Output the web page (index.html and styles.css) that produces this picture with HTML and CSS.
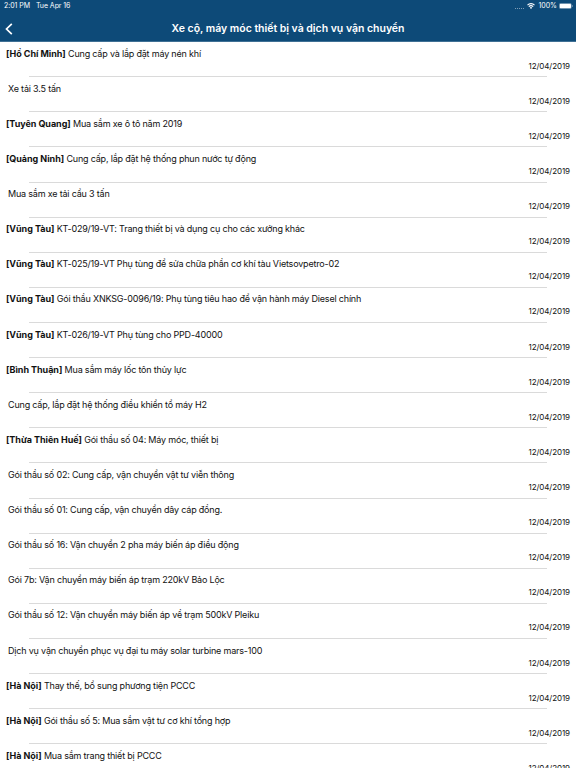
FILE: index.html
```html
<!DOCTYPE html>
<html lang="vi">
<head>
<meta charset="utf-8">
<title>Xe cộ, máy móc thiết bị và dịch vụ vận chuyển</title>
<link rel="stylesheet" href="styles.css">
</head>
<body>
<header class="header">
  <div class="status">
    <span class="clock">2:01 PM</span><span class="day">Tue Apr 16</span>
    <span class="dots"></span>
    <svg class="wifi" viewBox="0 0 16 12" fill="none" stroke="#fff" stroke-width="2.2"><path d="M1 4.2a10 10 0 0 1 14 0M3.6 7.3a6.3 6.3 0 0 1 8.8 0"/><path d="M8 11.8 5.6 9.3a3.4 3.4 0 0 1 4.8 0z" fill="#fff" stroke="none"/></svg>
    <span class="percent">100%</span>
    <svg class="battery" viewBox="0 0 14 6"><rect x=".25" y=".25" width="12.2" height="5.5" rx="1.5" fill="none" stroke="#9db5c9" stroke-width=".5"/><rect x=".7" y=".7" width="11.3" height="4.6" rx="1" fill="#fff"/><path d="M13 2v2q.7-.3.7-1t-.7-1" fill="#b5c7d7"/></svg>
  </div>
  <div class="nav">
    <svg class="back" viewBox="0 0 8 12" fill="none" stroke="#fff" stroke-width="1.7"><path d="M6.8 .9 1.5 6l5.3 5.1"/></svg>
    <h1 class="title">Xe cộ, máy móc thiết bị và dịch vụ vận chuyển</h1>
  </div>
</header>
<main class="list" id="list"></main>
<script src="script.js"></script>
</body>
</html>
```
FILE: styles.css
```css
* { box-sizing: border-box; }
body { margin: 0; height: 768px; overflow: hidden; background: #fff; color: #111; font-family: Inter, "Noto Sans", sans-serif; }
.header { height: 42px; background: #0d4a78; border-bottom: 1px solid #3f7095; color: #fff; }
.status { height: 12px; padding: 0 3px 0 4px; display: flex; align-items: center; font-size: 7px; line-height: 12px; }
.clock, .day { letter-spacing: -.06px; }
.day { margin-left: 6px; }
.dots { width: 9px; border-bottom: 1px dotted #7e9db6; margin: 4px 3px 0 auto; }
.wifi { width: 8px; height: 6px; margin-right: 3px; }
.battery { width: 14px; height: 6px; margin-left: 2px; }
.nav { height: 29px; display: grid; grid-template-columns: 20px 1fr 20px; align-items: center; }
.back { width: 8px; height: 12px; margin: 4px 0 0 5px; }
.title { margin: 5px 0 0; text-align: center; font-size: 10.5px; font-weight: 600; letter-spacing: -.02px; line-height: 24px; white-space: nowrap; }
.row { height: 35.12px; padding: 5px 6px 0; display: flex; flex-direction: column; }
.list { margin-top: -.3px; }
.row + .row::before { content: ""; height: 1px; margin: -5.6px 23px 4.6px; background: #dadada; flex: none; }
.name { height: 13px; line-height: 13px; font-size: 9px; letter-spacing: -.19px; white-space: pre; }
.name b { font-weight: 700; letter-spacing: -.04px; }
.plain { padding-left: 2px; }
.date { height: 13px; line-height: 13px; font-size: 8px; letter-spacing: -.08px; text-align: right; }
```
FILE: script.js
```js
const items = [
  ["Hồ Chí Minh", "Cung cấp và lắp đặt máy nén khí"],
  ["", "Xe tải 3.5 tấn"],
  ["Tuyên Quang", "Mua sắm xe ô tô năm 2019"],
  ["Quảng Ninh", "Cung cấp, lắp đặt hệ thống phun nước tự động"],
  ["", "Mua sắm xe tải cẩu 3 tấn"],
  ["Vũng Tàu", "KT-029/19-VT: Trang thiết bị và dụng cụ cho các xưởng khác"],
  ["Vũng Tàu", "KT-025/19-VT Phụ tùng để sửa chữa phần cơ khí tàu Vietsovpetro-02"],
  ["Vũng Tàu", "Gói thầu XNKSG-0096/19: Phụ tùng tiêu hao để vận hành máy Diesel chính"],
  ["Vũng Tàu", "KT-026/19-VT Phụ tùng cho PPD-40000"],
  ["Bình Thuận", "Mua sắm máy lốc tôn thủy lực"],
  ["", "Cung cấp, lắp đặt hệ thống điều khiển tổ máy H2"],
  ["Thừa Thiên Huế", "Gói thầu số 04: Máy móc, thiết bị"],
  ["", "Gói thầu số 02: Cung cấp, vận chuyển vật tư viễn thông"],
  ["", "Gói thầu số 01: Cung cấp, vận chuyển dây cáp đồng."],
  ["", "Gói thầu số 16: Vận chuyển 2 pha máy biến áp điều động"],
  ["", "Gói 7b: Vận chuyển máy biến áp trạm 220kV Bảo Lộc"],
  ["", "Gói thầu số 12: Vận chuyển máy biến áp về trạm 500kV Pleiku"],
  ["", "Dịch vụ vận chuyển phục vụ đại tu máy solar turbine mars-100"],
  ["Hà Nội", "Thay thế, bổ sung phương tiện PCCC"],
  ["Hà Nội", "Gói thầu số 5: Mua sắm vật tư cơ khí tổng hợp"],
  ["Hà Nội", "Mua sắm trang thiết bị PCCC"],
];
document.getElementById("list").innerHTML = items.map(([place, text]) =>
  `<article class="row"><div class="name${place ? "" : " plain"}">${place ? `<b>[${place}]</b> ` : ""}<span>${text}</span></div><div class="date">12/04/2019</div></article>`
).join("");
```
